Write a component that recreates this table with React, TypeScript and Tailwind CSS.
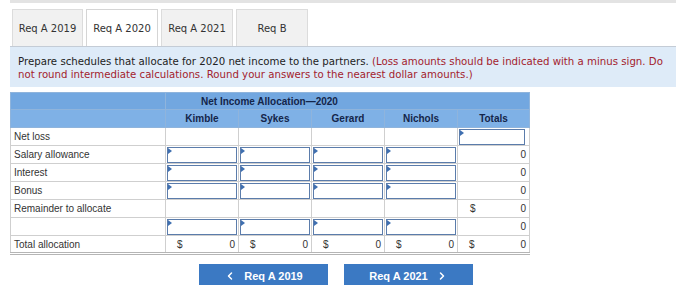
import { ChevronLeft, ChevronRight } from "lucide-react"

const partners = ["Kimble", "Sykes", "Gerard", "Nichols"]

const rows = [
  { label: "Net loss", input: false, total: "input" },
  { label: "Salary allowance", input: true, total: "0" },
  { label: "Interest", input: true, total: "0" },
  { label: "Bonus", input: true, total: "0" },
  { label: "Remainder to allocate", input: false, total: "$0" },
  { label: "", input: true, total: "0" },
]

function Entry() {
  return (
    <div className="relative h-[16px] mx-[1px] border border-[#5b7cab] bg-white">
      <span className="absolute left-0 top-0 w-0 h-0 border-t-[3px] border-b-[3px] border-l-[4px] border-t-transparent border-b-transparent border-l-[#3f6fb0]" />
    </div>
  )
}

export default function App() {
  return (
    <main className="w-[700px] h-[285px] overflow-hidden bg-white">
      <div className="ml-[10px] w-[666px] h-[3px] bg-[#e3e3e3]" />

      {/* tabs */}
      <div className="flex gap-[3px] ml-[12px] mt-[6px] font-['DejaVu_Sans',sans-serif] text-[10px] text-[#333]">
        <div className="w-[71px] h-[37px] flex items-center justify-center bg-[#f1f1f1] border border-[#dcdcdc] border-b-0">Req A 2019</div>
        <div className="w-[72px] h-[37px] flex items-center justify-center bg-white border border-[#d5d5d5] border-b-0 relative z-10 -mb-[1px]">Req A 2020</div>
        <div className="w-[72px] h-[37px] flex items-center justify-center bg-[#f1f1f1] border border-[#dcdcdc] border-b-0">Req A 2021</div>
        <div className="w-[72px] h-[37px] flex items-center justify-center bg-[#f1f1f1] border border-[#dcdcdc] border-b-0">Req B</div>
      </div>

      {/* instructions */}
      <div className="ml-[10px] w-[666px] h-[41px] bg-[#deebf8] border-t border-[#c4ccd6] px-[8px] pt-[8px] font-['DejaVu_Sans',sans-serif] text-[10.2px] leading-[13px] text-[#222]">
        Prepare schedules that allocate for 2020 net income to the partners.{" "}
        <span className="text-[#a3222d]">(Loss amounts should be indicated with a minus sign. Do not round intermediate calculations. Round your answers to the nearest dollar amounts.)</span>
      </div>

      {/* allocation table */}
      <table className="ml-[10px] mt-[5px] border-collapse font-['Liberation_Sans',Arial,sans-serif] text-[10px] text-[#333]">
        <thead>
          <tr className="h-[17px] bg-[#72a7e0] text-[#14254a] font-bold">
            <th className="w-[155px] border border-[#8fb4dc]" />
            <th colSpan={5} className="border border-[#8fb4dc] font-bold text-left pl-[35px]">Net Income Allocation—2020</th>
          </tr>
          <tr className="h-[18px] bg-[#7fb1e6] text-[#14254a]">
            <th className="border border-[#8fb4dc]" />
            {partners.map((p) => (
              <th key={p} className="w-[73px] border border-[#8fb4dc] font-bold">{p}</th>
            ))}
            <th className="w-[72px] border border-[#8fb4dc] font-bold">Totals</th>
          </tr>
        </thead>
        <tbody>
          {rows.map((r, i) => (
            <tr key={i} className="h-[18px]">
              <td className="border border-[#cfcfcf] pl-[3px]">{r.label}</td>
              {partners.map((p) => (
                <td key={p} className="border border-[#cfcfcf] p-0">{r.input && <Entry />}</td>
              ))}
              <td className="border border-[#cfcfcf] p-0 pr-[3px]">
                {r.total === "input" ? (
                  <Entry />
                ) : r.total === "$0" ? (
                  <div className="flex justify-between pl-[12px]"><span>$</span><span>0</span></div>
                ) : (
                  <div className="text-right">0</div>
                )}
              </td>
            </tr>
          ))}
          <tr className="h-[18px] border-b-[3px] border-double border-b-[#b5b5b5]">
            <td className="border border-[#cfcfcf] pl-[3px]">Total allocation</td>
            {[0, 1, 2, 3, 4].map((k) => (
              <td key={k} className="border border-[#cfcfcf] border-b-[3px] border-b-[#b5b5b5] px-[3px]">
                <div className="flex justify-between pl-[8px]"><span>$</span><span>0</span></div>
              </td>
            ))}
          </tr>
        </tbody>
      </table>

      {/* navigation */}
      <div className="flex gap-[16px] ml-[199px] mt-[9px] font-['Liberation_Sans',Arial,sans-serif] text-[11px] font-bold text-white">
        <button className="w-[129px] h-[24px] bg-[#3b79c3] flex items-center justify-center gap-[8px]">
          <ChevronLeft size={12} strokeWidth={3} />
          Req A 2019
        </button>
        <button className="w-[129px] h-[24px] bg-[#3b79c3] flex items-center justify-center gap-[8px]">
          Req A 2021
          <ChevronRight size={12} strokeWidth={3} />
        </button>
      </div>
    </main>
  )
}
